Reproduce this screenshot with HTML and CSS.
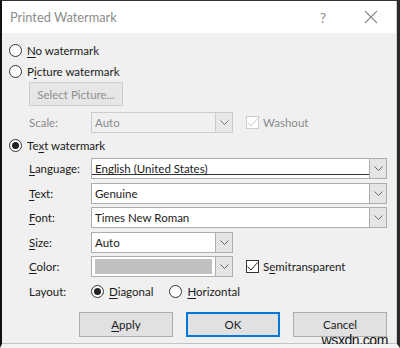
FILE: index.html
```html
<!DOCTYPE html>
<html lang="en">
<head>
    <meta charset="UTF-8">
    <meta name="viewport" content="width=device-width, initial-scale=1.0">
    <title>Printed Watermark</title>
    <link rel="stylesheet" href="styles.css">
</head>
<body>
    <div class="dialog">
        <div class="titlebar">
            <span class="title">Printed Watermark</span>
            <span class="help">?</span>
            <svg class="close" width="14" height="14" viewBox="0 0 14 14"><path d="M1 1 L13 13 M13 1 L1 13" stroke="#8a8a8a" stroke-width="1.1" fill="none"/></svg>
        </div>

        <div class="content">
            <div class="option"><span class="radio"></span><span><u>N</u>o watermark</span></div>
            <div class="option"><span class="radio"></span><span>P<u>i</u>cture watermark</span></div>

            <div class="indent">
                <button class="btn disabled select-btn">Select Picture...</button>
                <div class="field-row scale-row">
                    <span class="label disabled-text">Scale:</span>
                    <div class="combo small disabled-combo">
                        <span class="value">Auto</span>
                        <span class="drop"><svg width="9" height="5" viewBox="0 0 9 5"><path d="M0.5 0.5 L4.5 4.5 L8.5 0.5" stroke="#777" fill="none"/></svg></span>
                    </div>
                    <div class="check-wrap disabled-text">
                        <span class="checkbox light"><svg width="11" height="9" viewBox="0 0 11 9"><path d="M0.5 4.5 L4 8 L10.5 0.5" stroke="#c8c8c8" fill="none"/></svg></span>
                        <span>Washout</span>
                    </div>
                </div>
            </div>

            <div class="option text-option"><span class="radio checked"></span><span>Te<u>x</u>t watermark</span></div>

            <div class="indent form">
                <div class="field-row">
                    <span class="label"><u>L</u>anguage:</span>
                    <div class="combo wide language">
                        <span class="value">English (United States)</span>
                        <span class="drop"><svg width="9" height="5" viewBox="0 0 9 5"><path d="M0.5 0.5 L4.5 4.5 L8.5 0.5" stroke="#666" fill="none"/></svg></span>
                    </div>
                </div>
                <div class="field-row">
                    <span class="label"><u>T</u>ext:</span>
                    <div class="combo wide">
                        <span class="value">Genuine</span>
                        <span class="drop"><svg width="9" height="5" viewBox="0 0 9 5"><path d="M0.5 0.5 L4.5 4.5 L8.5 0.5" stroke="#666" fill="none"/></svg></span>
                    </div>
                </div>
                <div class="field-row">
                    <span class="label"><u>F</u>ont:</span>
                    <div class="combo wide">
                        <span class="value">Times New Roman</span>
                        <span class="drop"><svg width="9" height="5" viewBox="0 0 9 5"><path d="M0.5 0.5 L4.5 4.5 L8.5 0.5" stroke="#666" fill="none"/></svg></span>
                    </div>
                </div>
                <div class="field-row">
                    <span class="label"><u>S</u>ize:</span>
                    <div class="combo small">
                        <span class="value">Auto</span>
                        <span class="drop"><svg width="9" height="5" viewBox="0 0 9 5"><path d="M0.5 0.5 L4.5 4.5 L8.5 0.5" stroke="#666" fill="none"/></svg></span>
                    </div>
                </div>
                <div class="field-row">
                    <span class="label"><u>C</u>olor:</span>
                    <div class="combo small">
                        <span class="swatch"></span>
                        <span class="drop"><svg width="9" height="5" viewBox="0 0 9 5"><path d="M0.5 0.5 L4.5 4.5 L8.5 0.5" stroke="#666" fill="none"/></svg></span>
                    </div>
                    <div class="check-wrap">
                        <span class="checkbox"><svg width="11" height="9" viewBox="0 0 11 9"><path d="M0.5 4.5 L4 8 L10.5 0.5" stroke="#222" fill="none"/></svg></span>
                        <span>S<u>e</u>mitransparent</span>
                    </div>
                </div>
                <div class="field-row layout-row">
                    <span class="label">Layout:</span>
                    <div class="option inline"><span class="radio checked"></span><span><u>D</u>iagonal</span></div>
                    <div class="option inline"><span class="radio"></span><span><u>H</u>orizontal</span></div>
                </div>
            </div>

            <div class="buttons">
                <button class="btn"><u>A</u>pply</button>
                <button class="btn default">OK</button>
                <button class="btn">Cancel</button>
            </div>
        </div>

        <span class="site-mark">wsxdn.com</span>
    </div>
</body>
</html>
```

FILE: styles.css
```css
body {
    margin: 0;
    font-family: Lato, "Noto Sans", sans-serif;
    font-size: 11.5px;
    color: #1a1a1a;
    background-color: #fff;
}

.dialog {
    position: relative;
    width: 400px;
    height: 348px;
    box-sizing: border-box;
    border-left: 2px solid #111;
    border-top: 1px solid #333;
    border-right: 3px solid #2a2a2a;
    border-bottom: 4px solid #f4f4f4;
    display: flex;
    flex-direction: column;
    overflow: hidden;
}

.titlebar {
    height: 32px;
    flex-shrink: 0;
    background-color: #fff;
    display: flex;
    align-items: center;
    padding-left: 8px;
    border-right: 1px solid #cfcfcf;
}

.title {
    font-size: 12.8px;
    color: #8c8c8c;
    flex: 1;
    margin-top: -1px;
}

.help {
    color: #8c8c8c;
    font-size: 14px;
    margin-right: 38px;
}

.close {
    margin-right: 18px;
}

.content {
    flex: 1;
    background-color: #f0f0f0;
    padding: 7px 9px 0 7px;
    border-right: 1px solid #cfcfcf;
    border-bottom: 1px solid #c4c4c4;
    box-shadow: 0 2px 0 #555;
}

u {
    text-decoration-thickness: 1px;
    text-underline-offset: 2px;
}

.option {
    display: flex;
    align-items: center;
    gap: 5px;
    height: 21px;
}

.radio {
    width: 13px;
    height: 13px;
    border: 1px solid #333;
    border-radius: 50%;
    background-color: #fff;
    box-sizing: border-box;
    position: relative;
}

.radio.checked::after {
    content: "";
    position: absolute;
    left: 2px;
    top: 2px;
    width: 7px;
    height: 7px;
    border-radius: 50%;
    background-color: #222;
}

.indent {
    margin-left: 20px;
}

.btn {
    font-family: inherit;
    font-size: 11.5px;
    color: #1a1a1a;
    background-color: #e1e1e1;
    border: 1px solid #adadad;
    height: 25px;
    padding: 0;
}

.btn.disabled {
    color: #8f8f8f;
    background-color: #e6e6e6;
    border-color: #cccccc;
}

.select-btn {
    width: 94px;
    height: 24px;
    margin-top: 0;
}

.field-row {
    display: flex;
    align-items: center;
}

.scale-row {
    margin-top: 6px;
}

.label {
    width: 62px;
    flex-shrink: 0;
}

.disabled-text {
    color: #8a8a8a;
}

.combo {
    height: 21px;
    box-sizing: border-box;
    border: 1px solid #adadad;
    background-color: #fff;
    display: flex;
    align-items: center;
}

.combo.small {
    width: 142px;
}

.combo.wide {
    width: 296px;
}

.combo.disabled-combo {
    background-color: #f0f0f0;
    border-color: #cccccc;
    color: #8a8a8a;
}

.combo .value {
    flex: 1;
    padding-left: 3px;
}

.combo.language {
    box-shadow: inset 0 -3px 0 #fff, inset 0 -4px 0 #333;
}

.drop {
    width: 17px;
    height: 100%;
    box-sizing: border-box;
    border-left: 1px solid #adadad;
    background-color: #e5e5e5;
    display: flex;
    align-items: center;
    justify-content: center;
}

.disabled-combo .drop {
    border-left-color: #cccccc;
    background-color: #e8e8e8;
}

.swatch {
    flex: 1;
    height: 15px;
    margin: 0 3px;
    background-color: #c0c0c0;
}

.check-wrap {
    display: flex;
    align-items: center;
    gap: 4px;
    margin-left: 13px;
}

.checkbox {
    width: 13px;
    height: 13px;
    box-sizing: border-box;
    border: 1px solid #333;
    background-color: #fff;
    display: flex;
    align-items: center;
    justify-content: center;
}

.checkbox.light {
    border-color: #cccccc;
}

.text-option {
    margin-top: 2px;
}

.form {
    display: flex;
    flex-direction: column;
    gap: 3.5px;
    margin-top: 2px;
}

.layout-row {
    margin-top: 0.5px;
    height: 21px;
}

.option.inline {
    margin-right: 16px;
    gap: 5px;
}

.buttons {
    display: flex;
    justify-content: flex-end;
    gap: 13px;
    margin-top: 10px;
}

.buttons .btn {
    width: 94px;
}

.btn.default {
    border: 2px solid #0078d7;
}

.site-mark {
    position: absolute;
    right: 9px;
    bottom: -3px;
    font-family: "Liberation Sans", sans-serif;
    font-size: 14px;
    line-height: 14px;
    letter-spacing: -0.4px;
    color: #111;
}
```
